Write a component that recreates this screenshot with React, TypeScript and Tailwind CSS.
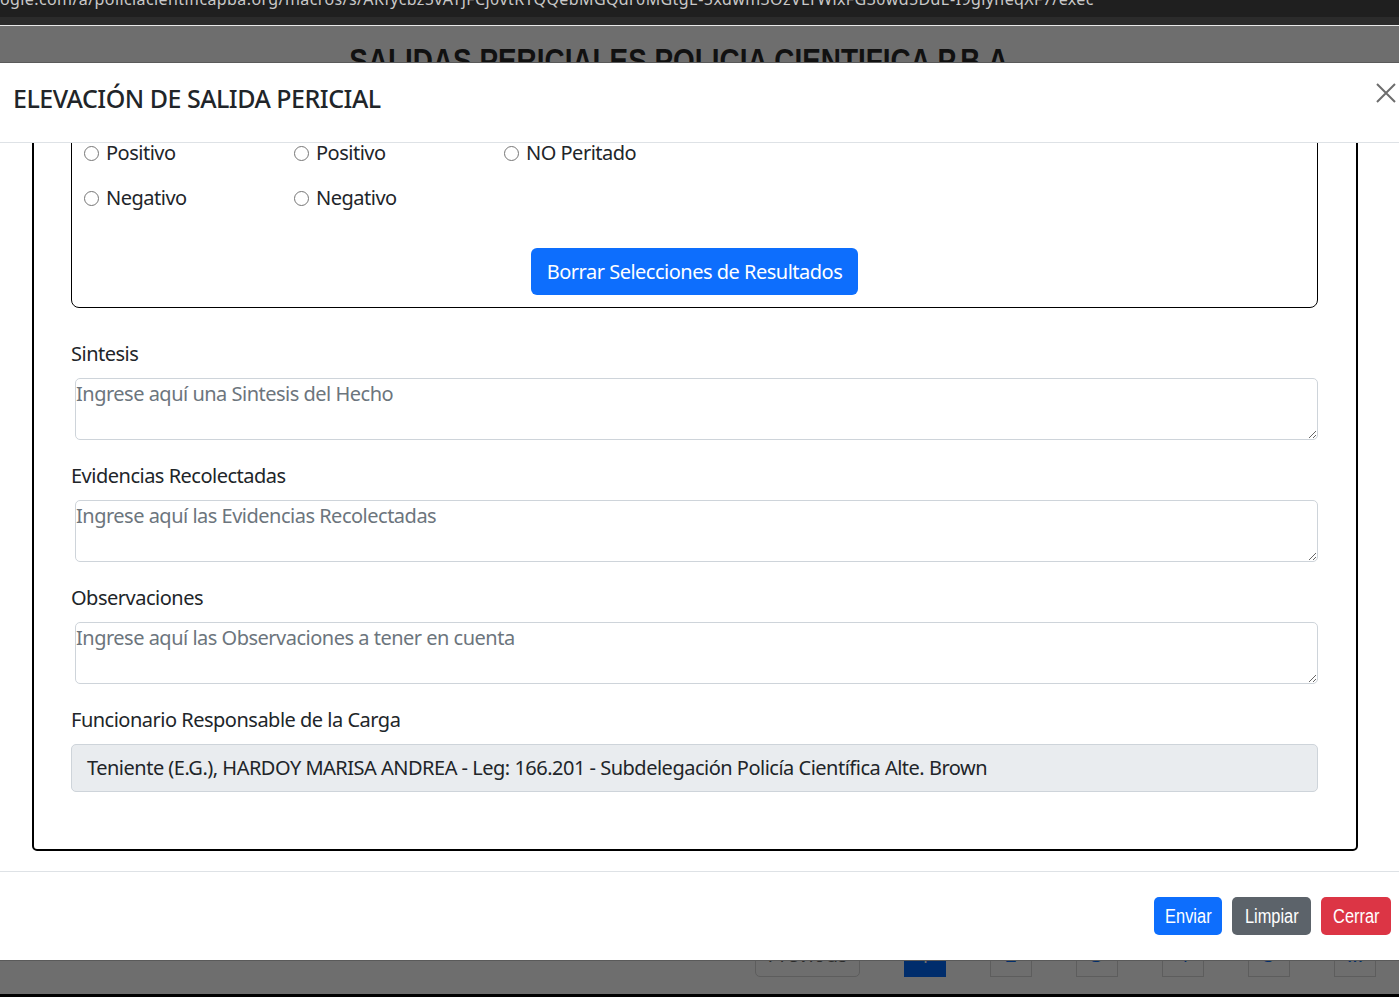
import React from 'react';

const body = "font-['Noto_Sans',sans-serif] tracking-[-0.5px]";
const narrow = "inline-block scale-x-[0.82] font-['Liberation_Sans',Arial,sans-serif] tracking-normal";

const Radio: React.FC<{ label: string }> = ({ label }) => (
  <label className="flex items-center gap-[7px] h-[20px] text-[20px] leading-[20px] text-[#212529]">
    <span className="w-[15px] h-[15px] rounded-full border border-[#767676] bg-white shrink-0" />
    <span>{label}</span>
  </label>
);

const Field: React.FC<{ label: string; placeholder: string }> = ({ label, placeholder }) => (
  <div className="mb-[20px]">
    <div className="h-[30px] pt-[1px] leading-[30px] text-[20px] text-[#212529] mb-[10px]">{label}</div>
    <div className="pl-[4px]">
      <textarea
        placeholder={placeholder}
        className={`block w-full h-[62px] border border-[#ced4da] rounded-[5px] p-0 text-[20px] leading-[30px] text-[#212529] placeholder:text-[#6c757d] outline-none ${body}`}
      />
    </div>
  </div>
);

const App: React.FC = () => {
  return (
    <div className="relative h-[997px] overflow-hidden bg-[#6e6e6e]">
      {/* browser bar */}
      <div className="h-[17px] bg-[#1f1f1f] overflow-hidden">
        <div className="-mt-[13px] whitespace-nowrap text-[16px] leading-[24px] tracking-[0.4px] text-[#c9c9c9] font-['Noto_Sans',sans-serif]">
          ogle.com/a/policiacientificapba.org/macros/s/AKfycbz5vATjFCj0vtRTQQebMGQdr0MGtgE-5xdwm3OzVErWixFG30wd5DdE-I9glyneqXF7/exec
        </div>
      </div>
      <div className="h-[8px] bg-[#2b2b2b]" />
      <div className="h-px bg-[#e8e8e8]" />

      {/* page behind the backdrop */}
      <div className="h-[909px]">
        <h1 className="pt-[13px] pr-[42px] text-center whitespace-nowrap text-[34px] leading-[40px] font-bold text-[#111]">
          <span className={narrow}>SALIDAS PERICIALES POLICIA CIENTIFICA P.B.A</span>
        </h1>
      </div>
      <div className="flex justify-end items-start gap-[44px] pr-[23px] h-[59px]">
        <div className="w-[105px] h-[42px] border border-[#5d5d5d] rounded-[5px] flex items-end justify-center pb-[6px] text-[20px] text-[#2b2b2b] font-['Noto_Sans',sans-serif]">Previous</div>
        <div className="w-[42px] h-[42px] bg-[#002d6c] flex items-end justify-center pb-[6px] text-[20px] text-[#6e6e6e]">1</div>
        {['2', '3', '4', '5', '...'].map((n) => (
          <div key={n} className="w-[42px] h-[42px] border border-[#5d5d5d] flex items-end justify-center pb-[6px] text-[20px] text-[#002d6c] font-['Noto_Sans',sans-serif]">{n}</div>
        ))}
      </div>
      <div className="h-[3px] bg-black" />

      {/* modal */}
      <div className={`absolute left-0 right-0 top-[62px] bg-white border-y border-[#5a5a5a] flex flex-col ${body}`}>
        {/* header */}
        <div className="h-[80px] border-b border-[#dee2e6] flex justify-between items-start pl-[13px] pr-[3px] pt-[20px]">
          <h5 className="text-[25px] leading-[30px] font-medium text-[#212529]">ELEVACIÓN DE SALIDA PERICIAL</h5>
          <button aria-label="Close" className="w-[20px] h-[20px] text-[#6d6d6d]">
            <svg viewBox="0 0 20 20" className="w-[20px] h-[20px]" fill="none" stroke="currentColor" strokeWidth={2}>
              <path d="M1 1L19 19M19 1L1 19" />
            </svg>
          </button>
        </div>

        {/* body */}
        <div className="h-[728px] overflow-hidden flex flex-col justify-end pl-[32px] pr-[41px] pb-[20px]">
          <div className="border-2 border-black rounded-[5px] pl-[37px] pr-[38px] pt-[30px] pb-[57px]">
            <div className="border border-black rounded-[8px] pl-[12px] pr-[12px] pt-[60px] pb-[12px]">
              <div className="grid grid-cols-[210px_210px_210px] gap-y-[25px]">
                <Radio label="Positivo" />
                <Radio label="Positivo" />
                <Radio label="NO Peritado" />
                <Radio label="Negativo" />
                <Radio label="Negativo" />
              </div>
              <div className="flex justify-center mt-[40px]">
                <button className="h-[47px] px-[16px] bg-[#0d6efd] text-white text-[20px] leading-[30px] rounded-[6px]">
                  Borrar Selecciones de Resultados
                </button>
              </div>
            </div>

            <div className="mt-[30px]">
              <Field label="Sintesis" placeholder="Ingrese aquí una Sintesis del Hecho" />
              <Field label="Evidencias Recolectadas" placeholder="Ingrese aquí las Evidencias Recolectadas" />
              <Field label="Observaciones" placeholder="Ingrese aquí las Observaciones a tener en cuenta" />
              <div className="h-[30px] pt-[1px] leading-[30px] text-[20px] text-[#212529] mb-[10px]">Funcionario Responsable de la Carga</div>
              <div className="h-[48px] bg-[#e9ecef] border border-[#ced4da] rounded-[5px] px-[15px] flex items-center text-[20px] text-[#212529] whitespace-nowrap">
                Teniente (E.G.), HARDOY MARISA ANDREA - Leg: 166.201 - Subdelegación Policía Científica Alte. Brown
              </div>
            </div>
          </div>
        </div>

        {/* footer */}
        <div className="h-[89px] border-t border-[#dee2e6] flex justify-end items-center gap-[10px] pr-[8px]">
          <button className="h-[38px] w-[68px] rounded-[5px] bg-[#0d6efd] text-white text-[20px]"><span className={narrow}>Enviar</span></button>
          <button className="h-[38px] w-[79px] rounded-[5px] bg-[#5c636a] text-white text-[20px]"><span className={narrow}>Limpiar</span></button>
          <button className="h-[38px] w-[70px] rounded-[5px] bg-[#dc3545] text-white text-[20px]"><span className={narrow}>Cerrar</span></button>
        </div>
      </div>
    </div>
  );
};

export default App;
